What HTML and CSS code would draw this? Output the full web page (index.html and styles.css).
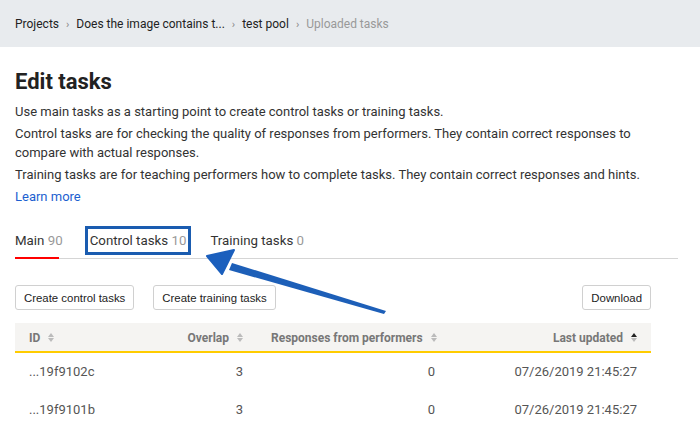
FILE: index.html
```html
<!DOCTYPE html>
<html>
<head>
<meta charset="utf-8">
<link rel="stylesheet" href="styles.css">
</head>
<body>
<div class="crumbs">
  <span class="crumb">Projects</span><span class="sep">›</span>
  <span class="crumb">Does the image contains t...</span><span class="sep">›</span>
  <span class="crumb">test pool</span><span class="sep">›</span>
  <span class="crumb current">Uploaded tasks</span>
</div>
<main class="page">
  <h1 class="title">Edit tasks</h1>
  <p class="text">Use main tasks as a starting point to create control tasks or training tasks.</p>
  <p class="text">Control tasks are for checking the quality of responses from performers. They contain correct responses to compare with actual responses.</p>
  <p class="text">Training tasks are for teaching performers how to complete tasks. They contain correct responses and hints.</p>
  <a class="link">Learn more</a>

  <div class="tabs">
    <div class="tab active">Main <span class="count">90</span></div>
    <div class="tab boxed">Control tasks <span class="count">10</span></div>
    <div class="tab">Training tasks <span class="count">0</span></div>
  </div>

  <div class="toolbar">
    <button class="btn">Create control tasks</button>
    <button class="btn">Create training tasks</button>
    <span class="spacer"></span>
    <button class="btn">Download</button>
  </div>

  <div class="table">
    <div class="row head">
      <div class="cell left">ID <span class="sort"><i class="up"></i><i class="down"></i></span></div>
      <div class="cell">Overlap <span class="sort"><i class="up"></i><i class="down"></i></span></div>
      <div class="cell">Responses from performers <span class="sort"><i class="up"></i><i class="down"></i></span></div>
      <div class="cell">Last updated <span class="sort active"><i class="up"></i><i class="down"></i></span></div>
    </div>
    <div class="row">
      <div class="cell left">...19f9102c</div>
      <div class="cell">3</div>
      <div class="cell">0</div>
      <div class="cell">07/26/2019 21:45:27</div>
    </div>
    <div class="row">
      <div class="cell left">...19f9101b</div>
      <div class="cell">3</div>
      <div class="cell">0</div>
      <div class="cell">07/26/2019 21:45:27</div>
    </div>
  </div>
</main>
<svg class="arrow" width="700" height="434" viewBox="0 0 700 434">
  <path d="M386 311 L232 263 L229 270 L384 314 Z" fill="#1d5fb8"/>
  <path d="M207 256 L234 250 L222 274 Z" fill="#1b5fbd" stroke="#1b5fbd" stroke-width="2" stroke-linejoin="round"/>
</svg>
</body>
</html>
```

FILE: styles.css
```css
* { box-sizing: border-box; }
html, body { margin: 0; padding: 0; }
body {
  width: 700px;
  height: 434px;
  overflow: hidden;
  background: #fff;
  font-family: Roboto, "Noto Sans", sans-serif;
  color: #222;
  position: relative;
}
.crumbs {
  height: 47px;
  background: #e8ebee;
  display: flex;
  align-items: center;
  padding: 1px 15px 0;
  font-size: 12px;
  color: #222;
}
.sep {
  color: #888;
  font-size: 11px;
  margin: 0 7px;
}
.crumb.current { color: #999; }
.page {
  padding: 0 49px 0 15px;
}
.title {
  margin: 22px 0 7px;
  font-size: 22px;
  font-weight: 700;
  line-height: 26px;
  color: #222;
}
.text {
  margin: 0 0 3px;
  font-size: 13px;
  line-height: 19px;
  color: #333;
}
.link {
  display: block;
  font-size: 13px;
  line-height: 19px;
  color: #1d5fd0;
}
.tabs {
  margin-top: 25px;
  margin-right: -27px;
  display: flex;
  border-bottom: 1px solid #d5d5d5;
}
.tab {
  font-size: 13.3px;
  line-height: 20px;
  color: #333;
  padding: 0 0 7px;
  margin-right: 24px;
  position: relative;
}
.tab .count { color: #999; }
.tab.active { margin-right: 27px; }
.tab.active::after {
  content: "";
  position: absolute;
  left: 0; right: 4px; bottom: -1px;
  height: 2px;
  background: #f00;
}
.tab.boxed::before {
  content: "";
  position: absolute;
  left: -5px; right: -5px; top: -5px; bottom: 3px;
  border: 3px solid #1a5cb0;
}
.toolbar {
  margin-top: 26px;
  display: flex;
  align-items: center;
  gap: 19px;
}
.spacer { flex: 1; }
.btn {
  font-family: "Liberation Sans", Arial, sans-serif;
  font-size: 11.4px;
  height: 25px;
  padding: 0 8px;
  background: #fff;
  border: 1px solid #d0d0d0;
  border-radius: 3px;
  color: #222;
}
.table {
  margin-top: 13px;
  width: 636px;
}
.row {
  display: grid;
  grid-template-columns: 135px 107px 192px 202px;
  height: 38px;
  align-items: center;
  font-size: 13px;
  color: #555;
}
.row.head {
  height: 30px;
  padding-top: 1px;
  background: #f5f4f2;
  border-bottom: 2px solid #fc0;
  font-size: 12px;
  font-weight: 700;
  color: #777;
}
.row.head + .row { height: 37px; }
.cell {
  padding: 0 14px;
  text-align: right;
  white-space: nowrap;
}
.cell.left { text-align: left; }
.sort {
  display: inline-flex;
  flex-direction: column;
  gap: 1px;
  margin-left: 5px;
  vertical-align: middle;
  position: relative;
  top: -1px;
}
.sort i {
  display: block;
  width: 0; height: 0;
  border-left: 3px solid transparent;
  border-right: 3px solid transparent;
}
.sort .up { border-bottom: 4px solid #bbb; }
.sort .down { border-top: 4px solid #bbb; }
.sort.active .up { border-bottom-color: #222; }
.arrow {
  position: absolute;
  left: 0; top: 0;
  pointer-events: none;
}
```
